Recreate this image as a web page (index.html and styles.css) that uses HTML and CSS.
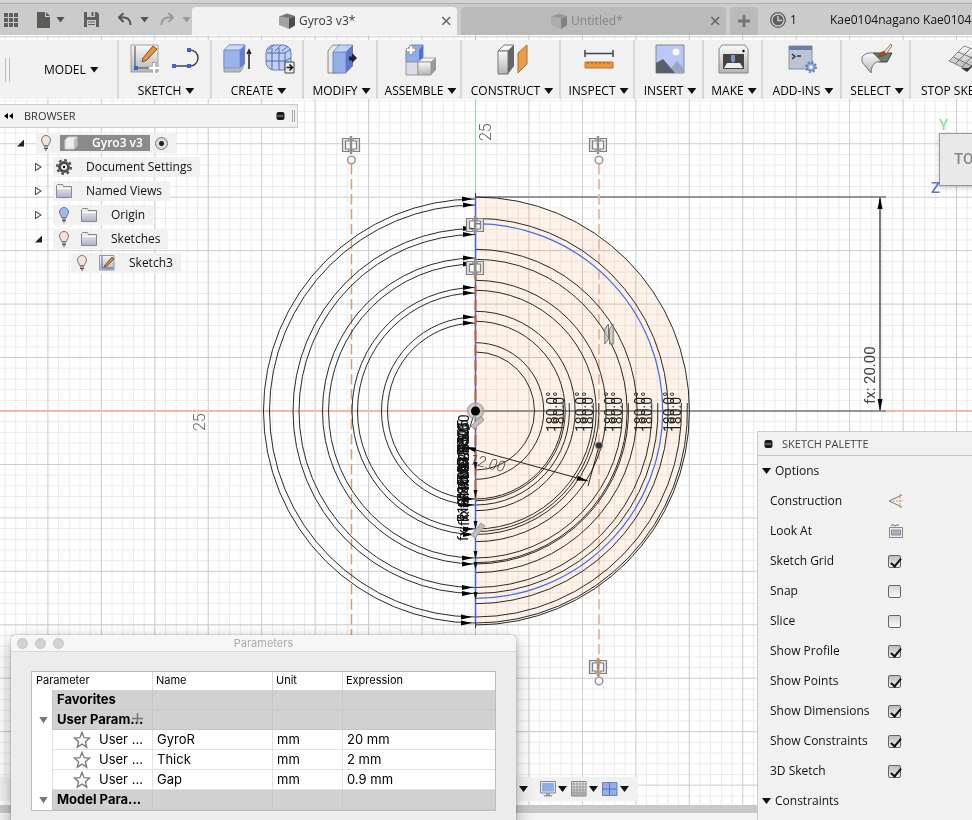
FILE: index.html
```html
<!DOCTYPE html>
<html lang="en">
<head>
<meta charset="utf-8">
<title>Gyro3 v3*</title>
<link rel="stylesheet" href="styles.css">
</head>
<body>
<svg class="defs" width="0" height="0" aria-hidden="true">
  <defs>
    <linearGradient id="gGrey" x1="0" y1="0" x2="0" y2="1"><stop offset="0" stop-color="#fafafa"/><stop offset="1" stop-color="#b4b4b4"/></linearGradient>
    <linearGradient id="gFolder" x1="0" y1="0" x2="0" y2="1"><stop offset="0" stop-color="#f4f4f4"/><stop offset="1" stop-color="#a9b2cd"/></linearGradient>
    <symbol id="bulb" viewBox="0 0 12 16"><path d="M3.500 10.500C3.500 8.500 1.500 7.500 1.500 5A4.500 4.500 0 0 1 10.500 5C10.500 7.500 8.500 8.500 8.500 10.500Z" stroke="#777"/><path d="M4 12h4M4 13.500h4M5 15h2" stroke="#555" fill="none"/></symbol>
    <symbol id="folder" viewBox="0 0 16 14"><path d="M.5 13.500V1.500L1.500.5H6.500L7.500 2.500H15.500V13.500Z" fill="url(#gFolder)" stroke="#888"/><path d="M1 4.500H15" stroke="#fff"/></symbol>
    <symbol id="sym" viewBox="0 0 20 20"><path d="M8 3.500H1.500V16.500H8V14H4.500V6H8ZM12 3.500H18.500V16.500H12V14H15.500V6H12Z" fill="#e4e4e4" stroke="#808080" stroke-width="1.200"/><path d="M10 1V19" stroke="#8f8f8f" stroke-width="2.500"/></symbol>
    <symbol id="par" viewBox="0 0 10 24"><path d="M.8 22V7L4.500 2V17ZM5.500 22V7L9.200 2V22Z" fill="#c4c4c4" fill-opacity=".7" stroke="#777"/></symbol>
    <symbol id="minus" viewBox="0 0 8 8"><rect x="0" y="0" width="8" height="8" rx="2" fill="#1c1c1c"/><path d="M1 4H7" stroke="#999"/></symbol>
    <symbol id="star" viewBox="0 0 18 18"><path d="M9 1.500 11.100 6.700 16.600 7.100 12.400 10.700 13.700 16.200 9 13.200 4.300 16.200 5.600 10.700 1.400 7.100 6.900 6.700Z" fill="#fff" stroke="#7d7d7d" stroke-width="1.400"/></symbol>
    <symbol id="cube" viewBox="0 0 16 16"><path d="M0 3.500 8 .5 16 3 10 5.500Z" fill="#777"/><path d="M0 3.500 10 5.500V16L0 12Z" fill="#a2a2a2"/><path d="M10 5.500 16 3V12.500L10 16Z" fill="#4c4c4c"/></symbol>
  </defs>
</svg>

<div class="app">
  <svg class="canvas" width="100%" height="100%" role="img" aria-label="Sketch canvas">
    <defs>
      <pattern id="minor" x="475" y="410.500" width="10.690" height="10.690" patternUnits="userSpaceOnUse"><path d="M0 .5H10.690M.5 0V10.690" stroke="#ebebeb" fill="none"/></pattern>
      <pattern id="major" x="475" y="410.500" width="53.450" height="53.450" patternUnits="userSpaceOnUse"><path d="M0 .5H53.450M.5 0V53.450" stroke="#dcdcdc" fill="none"/></pattern>
      <path id="arr" d="M0 0-11-2.500V2.500Z" fill="#000"/>
      <path id="arrd" d="M0 0-2-8H2Z" fill="#111"/>
    </defs>
    <rect width="100%" height="100%" fill="#fff"/>
    <path d="M475.500 197A214 214 0 0 1 475.500 625Z" fill="#fff3e9"/>
    <rect width="100%" height="100%" fill="url(#minor)" class="multiply"/>
    <rect width="100%" height="100%" fill="url(#major)" class="multiply"/>
    <path d="M0 411H475M886 411H3000" stroke="#f6b7a8" stroke-width="2"/>
    <path d="M475.500 0V197M475.500 625V700" stroke="#8fe0a0"/>
    <path d="M476 411H886M476 197H886" stroke="#7c7c7c" stroke-width="1.500"/>
    <path d="M351.500 164V700" stroke="#e39a58" stroke-width="1.500" stroke-dasharray="10.500 4.500"/>
    <path d="M599 164V677" stroke="#f3b19d" stroke-width="1.800" stroke-dasharray="10.500 4.500"/>

    <g fill="none" stroke="#2a2a2a" stroke-width="1">
      <path d="M475.500 197A214 214 0 0 1 475.500 625"/>
      <path d="M475.500 218.300A192.700 192.700 0 0 1 475.500 603.700"/>
      <path d="M475.500 249.300A161.700 161.700 0 0 1 475.500 572.700"/>
      <path d="M475.500 259.300A151.700 151.700 0 0 1 475.500 562.700"/>
      <path d="M475.500 280.300A130.700 130.700 0 0 1 475.500 541.700"/>
      <path d="M475.500 290.300A120.700 120.700 0 0 1 475.500 531.700"/>
      <path d="M475.500 311.300A99.700 99.700 0 0 1 475.500 510.700"/>
      <path d="M475.500 321.300A89.700 89.700 0 0 1 475.500 500.700"/>
      <path d="M475.500 342.700A68.300 68.300 0 0 1 475.500 479.300"/>
      <path d="M475.500 352A59 59 0 0 1 475.500 470"/>
      <path d="M687.300 403A212 212 0 0 1 475.500 623A212 212 0 0 1 475.500 199"/>
      <path d="M681.300 403A206 206 0 0 1 475.500 617A206 206 0 0 1 475.500 205"/>
      <path d="M657.800 403A182.500 182.500 0 0 1 475.500 593.500A182.500 182.500 0 0 1 475.500 228.500"/>
      <path d="M651.800 403A176.500 176.500 0 0 1 475.500 587.500A176.500 176.500 0 0 1 475.500 234.500"/>
      <path d="M628.300 403A153 153 0 0 1 475.500 564A153 153 0 0 1 475.500 258"/>
      <path d="M622.300 403A147 147 0 0 1 475.500 558A147 147 0 0 1 475.500 264"/>
      <path d="M598.700 403A123.500 123.500 0 0 1 475.500 534.500A123.500 123.500 0 0 1 475.500 287.500"/>
      <path d="M593.200 403A118 118 0 0 1 475.500 529A118 118 0 0 1 475.500 293"/>
      <path d="M569.100 403A94 94 0 0 1 475.500 505A94 94 0 0 1 475.500 317"/>
      <path d="M563.100 403A88 88 0 0 1 475.500 499A88 88 0 0 1 475.500 323"/>
    </g>
    <path d="M475.500 223.700A187.300 187.300 0 0 1 475.500 598.300" fill="none" stroke="#3a6cf0" stroke-width="1.200"/>
    <path d="M475.500 193V628" stroke="#333"/>
    <path d="M475.500 198V622" stroke="#3f62e0" stroke-width="1.500"/>
    <path d="M475.500 270V500" stroke="#b9622f" stroke-width="2" stroke-dasharray="10.500 4.500"/>
    <g>
      <use href="#arr" x="473" y="199"/><use href="#arr" x="474" y="205"/><use href="#arr" x="474" y="228.500"/><use href="#arr" x="474" y="234.500"/>
      <use href="#arr" x="474" y="258"/><use href="#arr" x="474" y="264"/><use href="#arr" x="474" y="287.500"/><use href="#arr" x="474" y="293"/>
      <use href="#arr" x="474" y="317"/><use href="#arr" x="474" y="323"/><use href="#arr" x="474" y="499"/><use href="#arr" x="474" y="505"/>
      <use href="#arr" x="474" y="529"/><use href="#arr" x="474" y="534.500"/><use href="#arr" x="473" y="558"/><use href="#arr" x="473" y="564"/>
      <use href="#arr" x="473" y="587.500"/><use href="#arr" x="473" y="593.500"/><use href="#arr" x="472" y="617"/><use href="#arr" x="472" y="623"/>
      <use href="#arrd" x="475.500" y="470"/><use href="#arrd" x="475.500" y="498"/><use href="#arrd" x="475.500" y="529"/><use href="#arrd" x="475.500" y="559"/><use href="#arrd" x="475.500" y="570"/><use href="#arrd" x="475.500" y="600"/>
    </g>

    <path d="M880 198V410" stroke="#6e6e6e" stroke-width="1.800"/>
    <path d="M880 197 877.500 209H882.500ZM880 411 877.500 399H882.500Z" fill="#000"/>
    <path d="M465 447 588 481M599 446 588 486M475 411 469 430" stroke="#222" fill="none"/>
    <path d="M588 481 576.500 480.500 577.800 475.700ZM465 447 476 447.500 475 452Z" fill="#000"/>

    <use href="#sym" x="341" y="135" width="20" height="20"/><use href="#sym" x="588" y="135" width="20" height="20"/>
    <use href="#sym" x="465" y="215" width="20" height="20"/><use href="#sym" x="465" y="258" width="20" height="20"/>
    <use href="#sym" x="588" y="657" width="20" height="20"/>
    <path d="M598 658V676" stroke="#e28a3c" stroke-width="2" stroke-dasharray="6 5"/>
    <use href="#par" x="604" y="322" width="10" height="24"/>
    <g fill="#bdbdbd" stroke="#999"><path d="M471 426 481 416 484 420 474 429ZM471 535 481 523 485 526 475 538Z"/></g>
    <g fill="#fff" stroke="#999" stroke-width="1.500"><circle cx="351.500" cy="160" r="3.800"/><circle cx="599" cy="160" r="3.800"/><circle cx="599" cy="681" r="3.800"/></g>
    <circle cx="475.500" cy="411" r="8" fill="#bbb" stroke="#999" stroke-width="2" opacity=".7"/><circle cx="475.500" cy="411" r="4.500"/>
    <circle cx="599" cy="445.500" r="3.500" fill="#333" stroke="#888"/>

    <g class="dim">
      <text transform="translate(875 404) rotate(-90)">fx: 20.00</text>
      <text transform="translate(469 464) rotate(13)" class="slant">12.00</text>
      <g class="tight">
        <text transform="translate(557 432) rotate(-90)">180.0°</text><text transform="translate(564 432) rotate(-90)">180.0°</text>
        <text transform="translate(586 432) rotate(-90)">180.0°</text><text transform="translate(593 432) rotate(-90)">180.0°</text>
        <text transform="translate(615 432) rotate(-90)">180.0°</text><text transform="translate(622 432) rotate(-90)">180.0°</text>
        <text transform="translate(645 432) rotate(-90)">180.0°</text><text transform="translate(652 432) rotate(-90)">180.0°</text>
        <text transform="translate(674 432) rotate(-90)">180.0°</text><text transform="translate(681 432) rotate(-90)">180.0°</text>
      </g>
      <g class="stack">
        <text transform="translate(468 541) rotate(-90)">fx: R19.80</text><text transform="translate(469 526) rotate(-90)">fx: R17.00</text>
        <text transform="translate(468 520) rotate(-90)">fx: R16.50</text><text transform="translate(469 508) rotate(-90)">fx: R14.25</text>
        <text transform="translate(468 499) rotate(-90)">fx: R13.75</text><text transform="translate(469 491) rotate(-90)">fx: R11.50</text>
        <text transform="translate(468 485) rotate(-90)">fx: R11.00</text><text transform="translate(469 479) rotate(-90)">fx: R8.80</text>
        <text transform="translate(468 474) rotate(-90)">fx: R8.25</text><text transform="translate(469 469) rotate(-90)">fx: R5.50</text>
      </g>
      <g class="scale"><text transform="translate(491 141) rotate(-90)">25</text><text transform="translate(205 431) rotate(-90)">25</text></g>
    </g>
  </svg>

  <header class="topbar">
    <nav class="quick" aria-label="Quick access">
      <button class="ib" aria-label="Data panel"><svg width="14" height="14" fill="#5f5f5f"><path d="M0 0h4v4H0zM5 0h4v4H5zM10 0h4v4H10zM0 5h4v4H0zM5 5h4v4H5zM10 5h4v4H10zM0 10h4v4H0zM5 10h4v4H5zM10 10h4v4H10z"/></svg></button>
      <button class="ib file" aria-label="File"><svg width="13" height="16"><path d="M0 0H8V5H13V16H0Z" fill="#5b5b58"/><path d="M9 0 13 4H9Z" fill="#5b5b58"/></svg><i class="tri grey"></i></button>
      <button class="ib" aria-label="Save"><svg width="15" height="15"><path d="M0 0H13L15 2V15H0Z" fill="#5f5f5f"/><path d="M3 0H11V5H3Z" fill="#ccc"/><path d="M7.500 0h2v4h-2z" fill="#5f5f5f"/><path d="M3 8H12V15H3Z" fill="#ccc"/><path d="M4 10H11M4 12.500H11" stroke="#5f5f5f"/></svg></button>
      <button class="ib undo" aria-label="Undo"><svg width="14" height="13"><path d="M1 4.500H6Q12.500 5 12.500 12" fill="none" stroke="#555" stroke-width="2"/><path d="M5.500 0 1 4.500 5.500 9" fill="none" stroke="#555" stroke-width="2"/></svg><i class="tri grey"></i></button>
      <button class="ib redo" aria-label="Redo"><svg width="14" height="13"><path d="M13 4.500H8Q1.500 5 1.500 12" fill="none" stroke="#999" stroke-width="2"/><path d="M8.500 0 13 4.500 8.500 9" fill="none" stroke="#999" stroke-width="2"/></svg><i class="tri pale"></i></button>
    </nav>
    <div class="tab active"><svg width="16" height="16"><use href="#cube"/></svg><span>Gyro3 v3*</span><button class="close" aria-label="Close Gyro3 v3*">×</button></div>
    <div class="tab"><svg width="16" height="16" opacity=".5"><use href="#cube"/></svg><span>Untitled*</span><button class="close" aria-label="Close Untitled*">×</button></div>
    <button class="newtab" aria-label="New tab"><svg width="12" height="12"><path d="M6 0V12M0 6H12" stroke="#777" stroke-width="3"/></svg></button>
    <button class="jobs"><svg width="16" height="16"><circle cx="8" cy="8" r="7.300" fill="none" stroke="#5e5e5e" stroke-width="1.300"/><circle cx="8" cy="8" r="5.300" fill="#5e5e5e"/><path d="M8 4V8.500H12" stroke="#ccc" stroke-width="1.500" fill="none"/></svg>1</button>
    <span class="user">Kae0104nagano Kae0104r.</span>
  </header>

  <div class="toolbar" role="toolbar">
    <div class="model"><i class="grip"></i><button class="label">MODEL<i class="tri"></i></button></div>
    <div class="group"><div class="icons">
      <svg width="30" height="30"><path d="M1 1H28V28H1Z" fill="url(#gGrey)" stroke="#a0a0a0"/><path d="M5 2V24H26" stroke="#444" fill="none"/><path d="M4 22h4v4H4z" fill="#3563e0"/><path d="M13 14 23 2 27 5 17 16 12 18Z" fill="#e59244" stroke="#7c4d2c"/><path d="M24 18V29M18.500 24H29" stroke="#999" stroke-width="4"/><path d="M24 19V29M19 24H29" stroke="#fff" stroke-width="2.500"/></svg>
      <svg width="30" height="30"><path d="M2 22H18A8 8 0 0 0 18 6" stroke="#444" fill="none" stroke-width="1.500"/><path d="M0 20h4v4H0zM15 20h4v4h-4zM15 4h4v4h-4z" fill="#3c63d8"/></svg>
    </div><button class="label">SKETCH<i class="tri"></i></button></div>
    <div class="group"><div class="icons">
      <svg width="30" height="30"><path d="M1 6 6 1H22L20 24 17 28H1Z" fill="url(#gGrey)" stroke="#999"/><path d="M1 6H17V24H1Z" fill="#9ab3e8" stroke="#7893d4"/><path d="M1 6 6 1H22L17 6Z" fill="#cfdaf6" stroke="#8398c8"/><path d="M17 6 22 1V20L17 24Z" fill="#6480d4"/><path d="M26 25V6M24 10 26 6 28 10" stroke="#222" fill="none" stroke-width="1.500"/></svg>
      <svg width="30" height="30"><rect x="1" y="1" width="25" height="25" rx="8" fill="#c3cff2" stroke="#6a7fbb"/><path d="M2 9H20L26 5M1 17H20L26 14M7 4V26M14 4V26M20 9V26M3 6 9 1M10 7 16 1M17 7 23 2" stroke="#4968bb" fill="none"/><path d="M20 18H29V29H20Z" fill="#eee" stroke="#444"/><path d="M21.500 23.500H27M24.500 20.500 27.500 23.500 24.500 26.500" stroke="#111" fill="none" stroke-width="1.500"/></svg>
    </div><button class="label">CREATE<i class="tri"></i></button></div>
    <div class="group"><div class="icons">
      <svg width="30" height="30"><path d="M1 7 6 1H14L10 7V29H1Z" fill="#eaeaea" stroke="#888"/><path d="M6 8H19V29H6Z" fill="#94afe8" stroke="#7188cc"/><path d="M6 8 12 1H26L19 8Z" fill="#c4d0f2" stroke="#8094c8"/><path d="M19 8 26 1V22L19 29Z" fill="#5a78d0"/><path d="M22 12.500H25V9L30 14 25 19V16.500H22Z" fill="#222"/></svg>
    </div><button class="label">MODIFY<i class="tri"></i></button></div>
    <div class="group"><div class="icons">
      <svg width="32" height="32"><path d="M1 6 6 1H18V14L14 18H1Z" fill="#90abe7" stroke="#7186ba"/><path d="M14 6 18 1V14L14 18Z" fill="#5371cc"/><path d="M1 18H13V31H1Z" fill="#dadde6" stroke="#999"/><path d="M13 18 18 14H31L26 18Z" fill="#f3f3f3" stroke="#aaa"/><path d="M13 18H26V31H13Z" fill="url(#gGrey)" stroke="#999"/><path d="M26 18 31 14V26L26 31Z" fill="#999"/><path d="M6 1V11M1 6H11" stroke="#999" stroke-width="4"/><path d="M6 2V10M2 6H10" stroke="#fff" stroke-width="2.500"/></svg>
    </div><button class="label">ASSEMBLE<i class="tri"></i></button></div>
    <div class="group"><div class="icons">
      <svg width="32" height="32"><path d="M2 7 8 1H18L12 7Z" fill="#f6f6f6" stroke="#777"/><path d="M2 7H12V30H2Z" fill="url(#gGrey)" stroke="#777"/><path d="M12 7 18 1V22L12 30Z" fill="#666"/><path d="M22 9 31 1V20L22 29Z" fill="#e99b45" stroke="#a66e3c"/></svg>
    </div><button class="label">CONSTRUCT<i class="tri"></i></button></div>
    <div class="group"><div class="icons">
      <svg width="30" height="30"><path d="M1 6V13M29 6V13M1 9.500H29" stroke="#444" stroke-width="1.500"/><path d="M1 18H29V24H1Z" fill="#e8983f" stroke="#bd742c"/><path d="M4 18v2M8 18v2M12 18v2M16 18v2M20 18v2M24 18v2" stroke="#8b561f"/></svg>
    </div><button class="label">INSPECT<i class="tri"></i></button></div>
    <div class="group"><div class="icons">
      <svg width="30" height="30"><path d="M1 1H29V29H1Z" fill="#b9c8f4" stroke="#888"/><circle cx="21" cy="8" r="3.500" fill="#fff7e8"/><path d="M12 29 22 17 29 25V29Z" fill="#98a5c4"/><path d="M1 19 8 15 20 29H1Z" fill="#5b5f6b"/></svg>
    </div><button class="label">INSERT<i class="tri"></i></button></div>
    <div class="group"><div class="icons">
      <svg width="32" height="30"><path d="M4 1H27L30 5V29H1V5Z" fill="url(#gGrey)" stroke="#888"/><path d="M5 10H26V25H5Z" fill="#444"/><path d="M9 19H22L25 24H6Z" fill="#eee"/><path d="M13 11H17V17L15 19 13 17Z" fill="#7797e0"/><circle cx="25.500" cy="7" r="1.200"/></svg>
    </div><button class="label">MAKE<i class="tri"></i></button></div>
    <div class="group"><div class="icons">
      <svg width="30" height="30"><path d="M1 2H24V25H1Z" fill="#bdc3d2" stroke="#8a91a5"/><path d="M1 2H24V6H1Z" fill="#6c7da6"/><path d="M4 10 7 12.500 4 15M9 12H13" stroke="#333" fill="none" stroke-width="1.500"/><circle cx="23" cy="23" r="4" fill="#8aabe7" stroke="#6683bd"/><circle cx="23" cy="23" r="5" fill="none" stroke="#6683bd" stroke-width="2" stroke-dasharray="2 1.900"/><circle cx="23" cy="23" r="1.800" fill="#fff"/></svg>
    </div><button class="label">ADD-INS<i class="tri"></i></button></div>
    <div class="group"><div class="icons">
      <svg width="32" height="30"><path d="M12 9H31L26 18H18L10 12Z" fill="#657f72" stroke="#444"/><path d="M1 13Q5 8 12 9L20 17Q10 18 10 29L1 18Z" fill="url(#gGrey)" stroke="#777"/><path d="M23 8 30 0 31 2 25 10Z" fill="#eee" stroke="#a76835"/><path d="M16 13Q19 7 23 7L26 10Q23 14 16 13Z" fill="#944e30"/></svg>
    </div><button class="label">SELECT<i class="tri"></i></button></div>
    <div class="group stop"><div class="icons">
      <svg width="36" height="30"><path d="M1 17 16 2 35 9 20 26Z" fill="url(#gGrey)" stroke="#888"/><path d="M5 13 24 22M10 8 29 16M7 20 22 5M14 23 29 7" stroke="#777"/><path d="M13 24 19 28 27 20 20 24Z" fill="#333"/></svg>
    </div><button class="label">STOP SKETCH<i class="tri"></i></button></div>
  </div>

  <aside class="browser">
    <div class="bhead"><svg width="9" height="6"><path d="M4 0V6L0 3ZM9 0V6L5 3Z"/></svg><span>BROWSER</span><svg class="bmin" width="9" height="8"><use href="#minus"/></svg><i class="bgrip"></i></div>
    <ul class="tree">
      <li class="lv0"><i class="open"></i><div class="node"><svg class="bulb warm" width="12" height="16"><use href="#bulb"/></svg><span class="sel"><svg width="14" height="14"><path d="M1 4 4 1H13V10L10 13H1Z" fill="#ededed" stroke="#ccc"/><path d="M10 4 13 1V10L10 13Z" fill="#bbb"/></svg><b>Gyro3 v3</b></span><input type="radio" checked aria-label="Activate Gyro3 v3"></div></li>
      <li class="lv1"><i class="shut"></i><div class="node"><svg width="16" height="16"><circle cx="8" cy="8" r="4.500" fill="none" stroke="#4f4f4f" stroke-width="3"/><circle cx="8" cy="8" r="7" fill="none" stroke="#4f4f4f" stroke-width="2" stroke-dasharray="2.750 2.750"/><circle cx="8" cy="8" r="1.200"/></svg><span class="t">Document Settings</span></div></li>
      <li class="lv1"><i class="shut"></i><div class="node"><svg width="16" height="14"><use href="#folder"/></svg><span class="t">Named Views</span></div></li>
      <li class="lv1"><i class="shut"></i><div class="node"><svg class="bulb cool" width="16" height="16"><use href="#bulb"/></svg><svg class="second" width="16" height="14"><use href="#folder"/></svg><span class="t">Origin</span></div></li>
      <li class="lv1"><i class="open"></i><div class="node"><svg class="bulb warm" width="16" height="16"><use href="#bulb"/></svg><svg class="second" width="16" height="14"><use href="#folder"/></svg><span class="t">Sketches</span></div></li>
      <li class="lv2"><div class="node"><svg class="bulb warm" width="16" height="16"><use href="#bulb"/></svg><svg class="second" width="16" height="16"><path d="M.5 .5H15V15H.5Z" fill="url(#gGrey)" stroke="#999"/><path d="M3 1V13H14" stroke="#4466c8" fill="none"/><path d="M6 10 13 2 15 4 8 11 5 12Z" fill="#dd8a41" stroke="#754"/></svg><span class="t">Sketch3</span></div></li>
    </ul>
  </aside>

  <div class="viewcube"><span class="ax y">Y</span><div class="face">TOP</div><span class="ax z">Z</span></div>

  <div class="bottom"></div>
  <div class="navbar">
    <button aria-label="Navigation"><i class="tri"></i></button>
    <button aria-label="Display settings"><svg width="16" height="16"><path d="M.5 .5H15.500V12H.5Z" fill="#e8e8e8" stroke="#888"/><path d="M2 2H14V10.500H2Z" fill="#8fabe8"/><path d="M6 12H10V14H12V15.500H4V14H6Z" fill="#999"/></svg><i class="tri"></i></button>
    <button aria-label="Grid and snaps"><svg width="16" height="16"><path d="M.5 .5H15V15H.5Z" fill="url(#gGrey)" stroke="#888"/><path d="M3 1V15M6 1V15M9 1V15M12 1V15M1 3H15M1 6H15M1 9H15M1 12H15" stroke="#999"/></svg><i class="tri"></i></button>
    <button aria-label="Viewports"><svg width="16" height="16"><path d="M.5 1.500H15V14.500H.5Z" fill="#93aee8" stroke="#6d80b0"/><path d="M7.500 2V14M1 8H15" stroke="#5570b4"/></svg><i class="tri"></i></button>
  </div>

  <aside class="palette">
    <div class="phead"><svg width="9" height="8"><use href="#minus"/></svg>SKETCH PALETTE</div>
    <button class="sect"><i class="tri"></i>Options</button>
    <div class="prow"><label for="p1">Construction</label><button id="p1" class="ib"><svg width="16" height="14"><path d="M14 1 1 7 14 13" stroke="#777" fill="none"/><path d="M2 7H15M12 0V14" stroke="#e58a62" stroke-dasharray="2 1"/></svg></button></div>
    <div class="prow"><label for="p2">Look At</label><button id="p2" class="ib"><svg width="16" height="14"><path d="M1.500 3.500H14.500V13.500H1.500Z" fill="#eee" stroke="#888"/><path d="M3.500 6H12.500V11H3.500Z" fill="#aab2c8" stroke="#888"/><path d="M3 2 5 .5 7 2 9 1H11" stroke="#666" fill="none"/></svg></button></div>
    <div class="prow"><label for="p3">Sketch Grid</label><input id="p3" type="checkbox" checked></div>
    <div class="prow"><label for="p4">Snap</label><input id="p4" type="checkbox"></div>
    <div class="prow"><label for="p5">Slice</label><input id="p5" type="checkbox"></div>
    <div class="prow"><label for="p6">Show Profile</label><input id="p6" type="checkbox" checked></div>
    <div class="prow"><label for="p7">Show Points</label><input id="p7" type="checkbox" checked></div>
    <div class="prow"><label for="p8">Show Dimensions</label><input id="p8" type="checkbox" checked></div>
    <div class="prow"><label for="p9">Show Constraints</label><input id="p9" type="checkbox" checked></div>
    <div class="prow"><label for="p10">3D Sketch</label><input id="p10" type="checkbox" checked></div>
    <button class="sect"><i class="tri"></i>Constraints</button>
  </aside>

  <section class="dialog" role="dialog" aria-labelledby="dt">
    <div class="dtitle"><span class="lights"><i></i><i></i><i></i></span><h2 id="dt">Parameters</h2></div>
    <table>
      <colgroup><col class="c0"><col class="c1"><col class="c2"><col class="c3"><col></colgroup>
      <thead><tr><th colspan="2">Parameter</th><th>Name</th><th>Unit</th><th>Expression</th></tr></thead>
      <tbody>
        <tr class="cat"><td></td><td>Favorites</td><td></td><td></td><td></td></tr>
        <tr class="cat"><td><i class="tri soft"></i></td><td><div class="userp">User Param...<button class="add" aria-label="Add user parameter"><svg width="11" height="11"><path d="M5.500 0V11M0 5.500H11" stroke="#777" stroke-width="1.500"/></svg></button></div></td><td></td><td></td><td></td></tr>
        <tr><td></td><td><span class="fav"><svg width="18" height="18"><use href="#star"/></svg>User ...</span></td><td>GyroR</td><td>mm</td><td>20 mm</td></tr>
        <tr><td></td><td><span class="fav"><svg width="18" height="18"><use href="#star"/></svg>User ...</span></td><td>Thick</td><td>mm</td><td>2 mm</td></tr>
        <tr><td></td><td><span class="fav"><svg width="18" height="18"><use href="#star"/></svg>User ...</span></td><td>Gap</td><td>mm</td><td>0.9 mm</td></tr>
        <tr class="cat"><td><i class="tri soft"></i></td><td>Model Para...</td><td></td><td></td><td></td></tr>
      </tbody>
    </table>
  </section>
</div>
</body>
</html>
```
FILE: styles.css
```css
* { box-sizing: border-box; }
html, body { height: 100%; margin: 0; }
body { font: 12px/16px "Open Sans", "Noto Sans", sans-serif; color: #111; overflow: hidden; }
button { font: inherit; color: inherit; background: none; border: 0; padding: 0; margin: 0; display: flex; align-items: center; }
svg { display: block; flex: none; }
.defs { position: absolute; }
.app { position: relative; height: 100vh; overflow: hidden; display: flex; flex-direction: column; }
.canvas { position: absolute; inset: 0; }
.multiply { mix-blend-mode: multiply; }
.app > * { flex: none; }

.tri { display: block; flex: none; width: 9px; height: 6px; background: #111; clip-path: polygon(0 0, 100% 0, 50% 100%); }
.tri.grey { background: #555; }
.tri.pale { background: #999; }
.tri.soft { background: #777; height: 7px; }

/* canvas lettering */
.dim { font-family: Roboto, "Liberation Sans", sans-serif; font-size: 15px; fill: #444; }
.tight { font-size: 14px; fill: #222; }
.stack { font-size: 14px; fill: #111; }
.slant { font-style: italic; font-weight: 300; }
.scale { font-size: 16px; font-weight: 300; fill: #666; }

/* top bar */
.topbar { position: relative; display: flex; align-items: flex-end; height: 35px; background: #cbcbcb; border-top: 3px solid #d2d2d2; box-shadow: inset 0 1px #aeaeae; overflow: hidden; }
.quick { flex: none; width: 192px; height: 31px; padding-left: 4px; display: flex; align-items: center; gap: 19px; }
.quick .file { gap: 6px; }
.quick .undo, .quick .redo { gap: 8px; }
.quick .redo { margin-left: -8px; }
.tab { flex: none; width: 265px; height: 28px; margin-right: 4px; padding: 0 5px 0 87px; display: flex; align-items: center; gap: 4px; background: #bababa; color: #888; border-radius: 4px 4px 0 0; font-family: "Noto Sans", sans-serif; }
.tab.active { background: #f2f2f2; color: #444; }
.tab + .tab { padding-left: 90px; }
.tab span { flex: 1; }
.close { color: #666; font-size: 20px; line-height: 20px; }
.newtab { flex: none; width: 28px; height: 28px; background: #bababa; border-radius: 4px 4px 0 0; justify-content: center; }
.jobs { flex: none; height: 30px; margin-left: 12px; gap: 4px; width: 60px; white-space: nowrap; }
.user { flex: none; line-height: 30px; white-space: nowrap; }

/* tool bar */
.toolbar { position: relative; height: 59px; margin-top: 5px; background: #f1f1f1; overflow: hidden; display: grid; grid-template-columns: 117px 93px 92px 74px 84px 99px 74px 69px 59px 79px 69px 1fr; }
.model { display: flex; align-items: center; gap: 34px; padding-left: 5px; }
.grip { width: 5px; height: 24px; border: solid #bbb; border-width: 0 1px; }
.group { display: flex; flex-direction: column; align-items: center; gap: 7px; padding: 4px 0 0 3px; border-left: 2px solid #d8d8d8; }
.icons { display: flex; gap: 12px; height: 32px; }
.label { gap: 4px; white-space: nowrap; color: #000; }
.stop { align-items: flex-start; padding-left: 10px; }
.stop .icons { margin-left: 27px; }

/* browser tree */
.browser { position: relative; width: 298px; margin-top: 5px; }
.bhead { display: flex; align-items: center; height: 24px; padding: 0 2px 0 4px; background: #f1f1f1; border: solid #ccc; border-width: 1px 1px 1px 0; color: #333; font-size: 11px; }
.bhead span { margin-left: 11px; flex: 1; }
.bgrip { width: 3px; height: 12px; margin-left: 7px; border: solid #aaa; border-width: 0 1px; }
.tree { list-style: none; margin: 3px 0 0; padding: 0; }
.tree li { display: flex; align-items: center; height: 24px; }
.lv0 { padding-left: 17px; }
.lv1 { padding-left: 35px; }
.lv2 { padding-left: 71px; }
.tree .open { width: 7px; height: 7px; margin-right: 11px; background: #222; clip-path: polygon(100% 0, 100% 100%, 0 100%); }
.lv0 .open { margin-right: 12px; }
.tree .shut { width: 7px; height: 9px; margin-right: 11px; background: #555; clip-path: polygon(0 0, 100% 50%, 0 100%, 0 0, 1px 2px, 1px 7px, 5px 50%, 1px 2px); }
.node { height: 20px; padding: 0 8px 0 3px; background: #f1f1f1; display: flex; align-items: center; }
.bulb.warm { fill: #fae0d6; }
.bulb.cool { fill: #9fbaf2; }
.second { margin-left: 9px; }
.t { margin-left: 14px; white-space: nowrap; }
.lv0 .node { padding: 0 8px 0 4px; }
.sel { display: flex; align-items: center; width: 90px; height: 16px; margin-left: 8px; padding-left: 4px; background: #8b8b8b; color: #fff; }
.sel b { margin-left: 14px; font-weight: 600; }
input { appearance: none; margin: 0; flex: none; }
input[type=radio] { width: 13px; height: 13px; margin-left: 5px; border: 1px solid #777; border-radius: 50%; background: radial-gradient(#222 0 2px, #ddd 3px); }

/* view cube */
.viewcube { position: absolute; right: -20px; top: 117px; width: 61px; }
.face { margin-left: 8px; height: 53px; padding-left: 14px; border: 1px solid #999; background: #e9e9e9; color: #888; font: 500 15px/51px Roboto, sans-serif; box-shadow: 0 2px 5px #0003; }
.ax { display: block; font: 500 15px/16px Roboto, sans-serif; }
.ax.y { margin-left: 8px; color: #84e89a; }
.ax.z { position: absolute; left: 0; bottom: -10px; color: #5076ee; }

/* bottom */
.bottom { position: relative; margin-top: auto; height: 15px; background: #f3f3f3; border-top: 8px solid #c9c9c9; }
.navbar { position: absolute; left: 0; bottom: 19px; width: 638px; height: 24px; padding-right: 9px; background: #f1f1f1; display: flex; justify-content: flex-end; align-items: center; gap: 4px; }
.navbar button { gap: 2px; }
.navbar button:first-child { margin-right: 8px; }

/* sketch palette */
.palette { position: absolute; right: 0; top: 431px; bottom: 0; width: 215px; background: #f1f1f1; border: solid #ccc; border-width: 1px 0 0 1px; overflow: hidden; }
.phead { display: flex; align-items: center; gap: 9px; height: 24px; padding-left: 6px; border-bottom: 1px solid #c4c4c4; color: #444; font-size: 11px; }
.sect { height: 30px; gap: 4px; padding-left: 4px; }
.prow { display: grid; grid-template-columns: 118px 16px; align-items: center; height: 30px; padding-left: 12px; }
input[type=checkbox] { width: 13px; height: 13px; border: 1px solid #666; border-radius: 2px; background: linear-gradient(#d5d5d5, #fafafa); position: relative; }
input[type=checkbox]:checked { background: linear-gradient(#bdbdbd, #eee); }
input[type=checkbox]:checked::after { content: ""; position: absolute; left: 4px; top: 0; width: 4px; height: 9px; border: solid #111; border-width: 0 2px 2px 0; transform: rotate(40deg); }

/* parameters dialog */
.dialog { position: absolute; left: 11px; top: 635px; width: 505px; height: 220px; border-radius: 5px 5px 0 0; background: #ececec; box-shadow: 0 0 2px #0006, 0 6px 18px #0005; font-family: Inter, "Liberation Sans", sans-serif; }
.dtitle { position: relative; display: flex; align-items: center; justify-content: center; height: 17px; background: #f6f6f6; border-bottom: 1px solid #d8d8d8; border-radius: 5px 5px 0 0; }
.dtitle h2 { margin: 0; font-size: 11px; font-weight: 400; color: #aaa; }
.lights { position: absolute; left: 6px; top: 3px; display: flex; gap: 7px; }
.lights i { width: 11px; height: 11px; border-radius: 50%; background: #d2d2d2; border: 1px solid #c5c5c5; }
table { width: 465px; margin: 19px 0 0 20px; table-layout: fixed; border-collapse: separate; border-spacing: 0; background: #fff; border: 1px solid #bdbdbd; font-size: 13px; color: #000; }
.c0 { width: 20px; }
.c1 { width: 100px; }
.c2 { width: 120px; }
.c3 { width: 70px; }
th { height: 18px; padding: 0 3px; font-size: 11px; line-height: 16px; font-weight: 400; text-align: left; vertical-align: top; border-left: 1px solid #ddd; }
th:first-child { border-left: 0; padding-left: 4px; }
td { height: 20px; padding: 0 0 0 4px; line-height: 19px; border-left: 1px solid #e2e2e2; border-bottom: 1px solid #e2e2e2; white-space: nowrap; overflow: hidden; }
td:first-child { border: 0; padding: 0 0 0 7px; }
.cat td { background: #d1d1d1; border-color: #c6c6c6; font-weight: 700; }
.cat td:first-child { background: #fff; }
.userp { position: relative; }
.add { position: absolute; left: 75px; top: 3px; }
.fav { display: flex; align-items: center; gap: 8px; padding-left: 16px; height: 19px; }
```
